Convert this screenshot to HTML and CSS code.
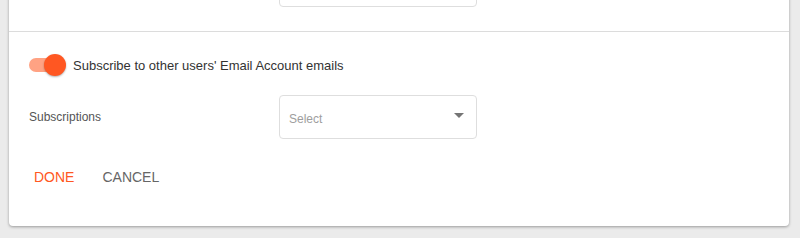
FILE: index.html
```html
<html lang="en">

<head>
    <link rel="stylesheet" href="styles.css">
    <meta charset="UTF-8">
    <title>Email Account subscriptions</title>
</head>

<body>
    <div class="card">
        <div class="section top">
            <div class="field-row">
                <span class="field-label"></span>
                <div class="select"></div>
            </div>
        </div>
        <div class="section">
            <label class="toggle-row">
                <span class="toggle on">
                    <span class="track"></span>
                    <span class="knob"></span>
                </span>
                <span class="toggle-text">Subscribe to other users' Email Account emails</span>
            </label>
            <div class="field-row">
                <span class="field-label">Subscriptions</span>
                <div class="select">
                    <span class="placeholder">Select</span>
                    <svg class="caret" width="10" height="5" viewBox="0 0 10 5">
                        <path d="M0 0 L10 0 L5 5 Z" fill="#757575" />
                    </svg>
                </div>
            </div>
            <div class="actions">
                <button class="btn primary">DONE</button>
                <button class="btn">CANCEL</button>
            </div>
        </div>
    </div>
</body>

</html>
```

FILE: styles.css
```css
html,
body {
    margin: 0;
    padding: 0;
    background-color: #ebebeb;
    font-family: "Liberation Sans", Arial, sans-serif;
    overflow: hidden;
}

* {
    box-sizing: border-box;
}

.card {
    margin: -60px 11px 0 9px;
    background: #fff;
    border-radius: 0 0 4px 4px;
    box-shadow: 0 1px 3px rgba(0, 0, 0, 0.35);
}

.section.top {
    padding: 23px 20px 24px 20px;
    border-bottom: 1px solid #dcdcdc;
}

.section {
    padding: 20px 20px 33px 20px;
}

.field-row {
    display: flex;
    align-items: center;
}

.field-label {
    width: 250px;
    font-size: 12px;
    color: #555;
}

.select {
    position: relative;
    display: flex;
    align-items: center;
    width: 198px;
    height: 44px;
    padding: 0 12px 0 9px;
    border: 1px solid #dedede;
    border-radius: 4px;
}

.placeholder {
    flex: 1;
    margin-top: 4px;
    font-size: 12px;
    color: #9e9e9e;
}

.caret {
    margin-top: -3px;
}

/* toggle */
.toggle-row {
    display: flex;
    align-items: center;
    height: 26px;
    margin-bottom: 17px;
}

.toggle {
    position: relative;
    width: 36px;
    height: 22px;
    margin-right: 8px;
}

.toggle .track {
    position: absolute;
    left: 0;
    top: 4px;
    width: 30px;
    height: 14px;
    border-radius: 7px;
    background: #ffa283;
}

.toggle .knob {
    position: absolute;
    left: 15px;
    top: 0;
    width: 22px;
    height: 22px;
    border-radius: 50%;
    background: #ff5722;
    box-shadow: 0 1px 2px rgba(0, 0, 0, 0.3);
}

.toggle-text {
    font-size: 13px;
    color: #333;
}

/* buttons */
.actions {
    display: flex;
    gap: 18px;
    margin-top: 22px;
}

.btn {
    background: none;
    border: 0;
    padding: 8px 5px;
    font-family: inherit;
    font-size: 14px;
    color: #666;
    cursor: pointer;
}

.btn.primary {
    color: #ff5722;
}
```
